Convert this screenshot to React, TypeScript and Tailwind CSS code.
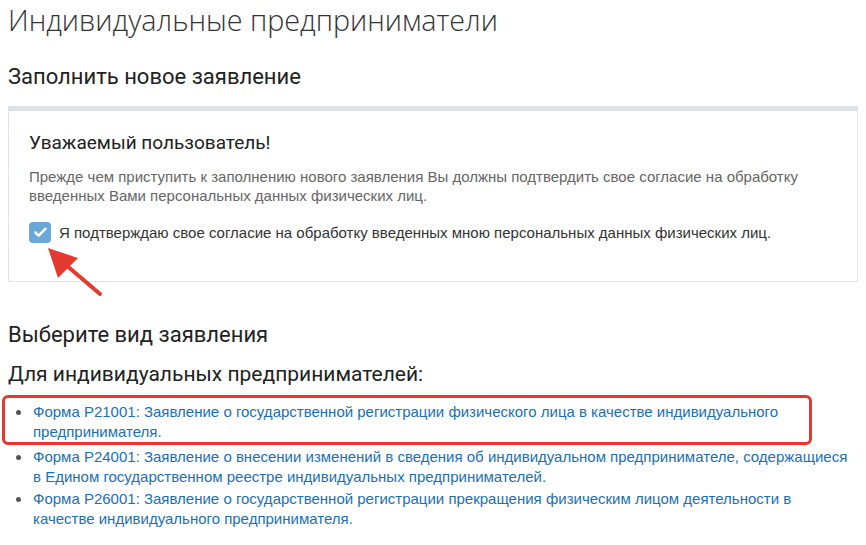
import { Check } from "lucide-react";

const forms = [
  {
    code: "Р21001",
    text: "Заявление о государственной регистрации физического лица в качестве индивидуального предпринимателя.",
    marked: true,
  },
  {
    code: "Р24001",
    text: "Заявление о внесении изменений в сведения об индивидуальном предпринимателе, содержащиеся в Едином государственном реестре индивидуальных предпринимателей.",
    marked: false,
  },
  {
    code: "Р26001",
    text: "Заявление о государственной регистрации прекращения физическим лицом деятельности в качестве индивидуального предпринимателя.",
    marked: false,
  },
];

export default function App() {
  return (
    <div className="relative w-[866px] h-[545px] overflow-hidden bg-white px-2 text-[#333] font-['Liberation_Sans',Arial,sans-serif]">
      <h1 className="pt-[2px] text-[28.7px] leading-[36px] font-light text-[#333] font-['Open_Sans',sans-serif]">
        Индивидуальные предприниматели
      </h1>

      <h2 className="mt-[25px] text-[22px] leading-[28px] text-[#222] font-['Roboto',sans-serif]">
        Заполнить новое заявление
      </h2>

      {/* блок согласия */}
      <div className="mt-[15px] h-[176px] border border-[#e1e5e8] border-t-[5px] border-t-[#dce3e6] px-5 pt-[19px]">
        <h3 className="text-[19px] leading-[26px] text-[#222] font-['Roboto',sans-serif]">
          Уважаемый пользователь!
        </h3>
        <p className="mt-[11px] text-[15px] leading-[19px] text-[#666]">
          Прежде чем приступить к заполнению нового заявления Вы должны подтвердить свое согласие на обработку введенных
          Вами персональных данных физических лиц.
        </p>
        <label className="mt-[15px] flex items-center gap-[8px] text-[15px] leading-[22px] text-[#333]">
          <span className="flex h-[21px] w-[22px] shrink-0 items-center justify-center rounded-[4px] bg-[#6aa8d7]">
            <Check className="h-[15px] w-[15px] text-white" strokeWidth={4} />
          </span>
          <span className="pt-[2px]">
            Я подтверждаю свое согласие на обработку введенных мною персональных данных физических лиц.
          </span>
        </label>
      </div>

      {/* стрелка */}
      <svg className="pointer-events-none absolute left-[44px] top-[244px]" width="62" height="56" viewBox="0 0 62 56">
        <line x1="56" y1="50" x2="22" y2="21" stroke="#e53a2f" strokeWidth="4" strokeLinecap="round" />
        <polygon points="4,4 34,14 14,34" fill="#e53a2f" />
      </svg>

      <h2 className="mt-[39px] text-[22px] leading-[28px] text-[#222] font-['Roboto',sans-serif]">
        Выберите вид заявления
      </h2>
      <h3 className="mt-[11px] text-[21px] leading-[28px] text-[#222] font-['Roboto',sans-serif]">
        Для индивидуальных предпринимателей:
      </h3>

      <ul className="mt-[7px] flex w-[843px] flex-col gap-[2px]">
        {forms.map((f) => (
          <li
            key={f.code}
            className={
              f.marked
                ? "-mx-[6px] w-[810px] rounded-[6px] border-[3px] border-[#e3392e] pt-[4px] pl-[11px]"
                : "pl-[8px]"
            }
          >
            <div className="flex text-[15px] leading-[20px]">
              <span className="w-[17px] shrink-0 pt-[8px]">
                <span className="block h-[5px] w-[5px] rounded-full bg-[#555]" />
              </span>
              <a href="#" className="text-[#1c6fb6]">
                {`Форма ${f.code}: ${f.text}`}
              </a>
            </div>
          </li>
        ))}
      </ul>
    </div>
  );
}
